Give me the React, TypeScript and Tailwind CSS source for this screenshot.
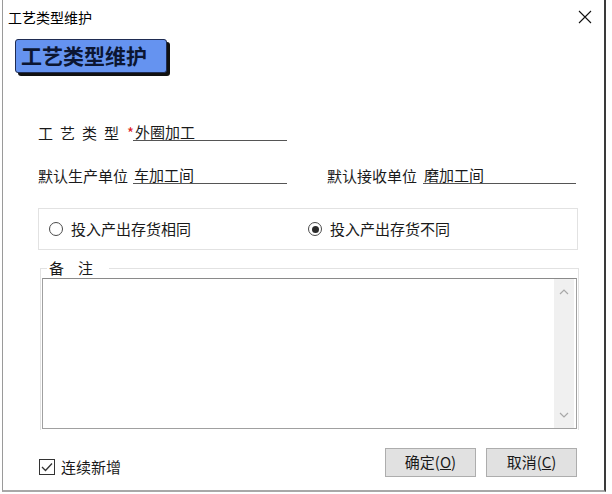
import React, { useState } from 'react'

const font = { fontFamily: '"Noto Sans CJK SC", "Microsoft YaHei", sans-serif' }

function Radio({ checked, label, onClick }: { checked: boolean; label: string; onClick: () => void }) {
  return (
    <label className="flex items-center gap-[8px] cursor-pointer" onClick={onClick}>
      <span className="w-[14px] h-[14px] rounded-full border border-[#4a4a4a] bg-white flex items-center justify-center">
        {checked && <span className="w-[7px] h-[7px] rounded-full bg-[#2a2a2a]" />}
      </span>
      <span className="text-[15px] leading-[18px] text-[#1a1a1a]">{label}</span>
    </label>
  )
}

export default function App() {
  const [sameStock, setSameStock] = useState(false)
  const [keepAdding, setKeepAdding] = useState(true)

  return (
    <div className="w-[612px] h-[494px] bg-white overflow-hidden" style={font}>
      <div className="ml-[2px] w-[604px] h-[492px] border-l border-l-[#9a9a9a] border-r-2 border-r-[#3a3a3a] border-b-2 border-b-[#a8a8a8] flex flex-col">
        {/* title bar */}
        <div className="h-[34px] flex items-center justify-between pl-[5px] pr-[12px]">
          <span className="text-[14px] text-black">工艺类型维护</span>
          <svg width="14" height="14" viewBox="0 0 14 14" className="mt-[-1px]">
            <path d="M1 1 L13 13 M13 1 L1 13" stroke="#111" strokeWidth="1.1" fill="none" />
          </svg>
        </div>

        {/* badge */}
        <div className="ml-[12px] mt-[5px] w-[152px] h-[34px] rounded-[3px] bg-[#6593f0] border border-[#1f2c52] shadow-[3px_3px_0_#111] flex items-center pl-[5px]">
          <span className="text-[21px] font-bold text-[#0c1632] whitespace-nowrap">工艺类型维护</span>
        </div>

        {/* row 1 */}
        <div className="mt-[51px] ml-[35px] flex items-end h-[17px]">
          <div className="w-[95px] flex items-end shrink-0">
            <div className="flex gap-[7px] text-[15px] leading-[16px] text-[#1a1a1a]">
              <span>工</span>
              <span>艺</span>
              <span>类</span>
              <span>型</span>
            </div>
            <span className="ml-[8px] text-[15px] leading-[16px] text-[#e02020]">*</span>
          </div>
          <div className="w-[154px] h-[17px] border-b border-b-[#555] text-[15px] leading-[16px] text-[#1a1a1a] pl-[2px]">外圈加工</div>
        </div>

        {/* row 2 */}
        <div className="mt-[26px] ml-[35px] flex items-end h-[17px]">
          <span className="w-[95px] text-[15px] leading-[16px] text-[#1a1a1a] whitespace-nowrap">默认生产单位</span>
          <div className="w-[154px] h-[17px] border-b border-b-[#555] text-[15px] leading-[16px] text-[#1a1a1a] pl-[1px]">车加工间</div>
          <span className="ml-[40px] w-[96px] text-[15px] leading-[16px] text-[#1a1a1a] whitespace-nowrap">默认接收单位</span>
          <div className="w-[153px] h-[17px] border-b border-b-[#555] text-[15px] leading-[16px] text-[#1a1a1a] pl-[1px]">磨加工间</div>
        </div>

        {/* radio group */}
        <div className="mt-[24px] ml-[35px] w-[540px] h-[42px] border border-[#e2e2e2] flex items-center pl-[10px]">
          <div className="w-[259px]">
            <Radio checked={sameStock} label="投入产出存货相同" onClick={() => setSameStock(true)} />
          </div>
          <Radio checked={!sameStock} label="投入产出存货不同" onClick={() => setSameStock(false)} />
        </div>

        {/* remarks */}
        <div className="relative mt-[18px] ml-[37px] w-[539px] h-[162px] border border-[#e2e2e2] border-b-0">
          <span className="absolute left-[6px] top-[-9px] bg-white px-[2px] text-[15px] leading-[16px] tracking-[14px] text-[#1a1a1a]">备注</span>
          <div className="mt-[9px] ml-[1px] w-[535px] h-[151px] border border-[#a0a0a0] border-t-[#8a8a8a] flex justify-end">
            <div className="w-[20px] h-full bg-[#f0f0f0] mr-[2px] flex flex-col items-center justify-between py-[10px]">
              <svg width="10" height="6" viewBox="0 0 10 6">
                <path d="M1 5 L5 1 L9 5" stroke="#a8a8a8" strokeWidth="1.2" fill="none" />
              </svg>
              <svg width="10" height="6" viewBox="0 0 10 6">
                <path d="M1 1 L5 5 L9 1" stroke="#a8a8a8" strokeWidth="1.2" fill="none" />
              </svg>
            </div>
          </div>
        </div>

        {/* footer */}
        <div className="mt-[18px] ml-[36px] mr-[27px] h-[29px] flex items-end justify-between">
          <label className="flex items-center gap-[6px] mb-[1px] cursor-pointer" onClick={() => setKeepAdding(!keepAdding)}>
            <span className="w-[16px] h-[16px] border border-[#333] bg-white flex items-center justify-center">
              {keepAdding && (
                <svg width="12" height="10" viewBox="0 0 12 10">
                  <path d="M1 5 L4.5 8.5 L11 1.5" stroke="#333" strokeWidth="1.3" fill="none" />
                </svg>
              )}
            </span>
            <span className="text-[15px] leading-[18px] text-[#1a1a1a]">连续新增</span>
          </label>
          <div className="flex gap-[10px]">
            <button className="w-[91px] h-[29px] bg-[#e1e1e1] border border-[#adadad] text-[15px] text-[#1a1a1a] flex items-center justify-center">
              确定(<span className="underline">O</span>)
            </button>
            <button className="w-[91px] h-[29px] bg-[#e1e1e1] border border-[#adadad] text-[15px] text-[#1a1a1a] flex items-center justify-center">
              取消(<span className="underline">C</span>)
            </button>
          </div>
        </div>
      </div>
    </div>
  )
}
